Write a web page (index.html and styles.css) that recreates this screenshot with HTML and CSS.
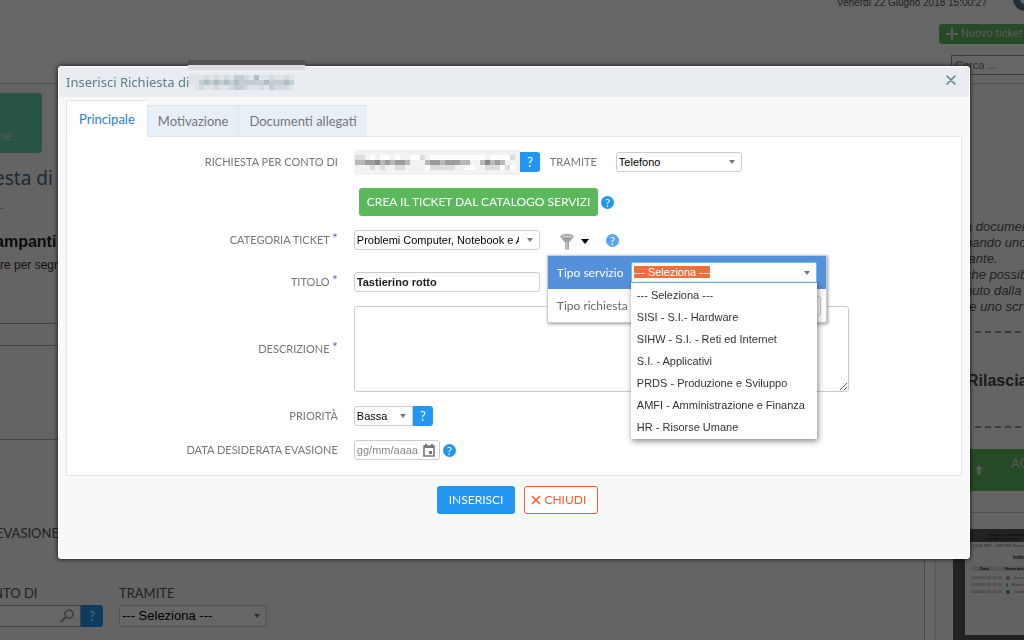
FILE: index.html
```html
<!DOCTYPE html>
<html lang="it">
<head>
<meta charset="utf-8">
<title>Inserisci Richiesta</title>
<link rel="stylesheet" href="styles.css">
</head>
<body>
<div class="page">
  <header class="top">
    <div class="clock">Venerdì 22 Giugno 2018 15:00:27 <span class="avatar"></span></div>
    <button class="new-ticket"><svg width="12" height="12" viewBox="0 0 12 12"><path d="M6 0v12M0 6h12" stroke="currentColor" stroke-width="2"/></svg>Nuovo ticket</button>
    <input class="search" aria-label="Cerca" placeholder="Cerca ...">
  </header>
  <div class="columns">
    <main class="main">
      <div class="tile">ne</div>
      <h1 class="h-request">esta di</h1>
      <p class="dot">.</p>
      <h2 class="h-print">ampanti</h2>
      <p class="p-print">re per segnalare</p>
      <div class="lines"><div></div><div></div><div></div></div>
      <p class="lbl due">EVASIONE</p>
      <div class="bg-form">
        <div class="bg-field left">
          <label class="lbl" for="bg-who">NTO DI</label>
          <div class="group"><span class="find"><input id="bg-who"><svg width="14" height="14" viewBox="0 0 14 14" fill="none" stroke="#999" stroke-width="1.6"><circle cx="9" cy="5" r="4"/><path d="M6 8L1 13" stroke-width="2"/></svg></span><button class="q big">?</button></div>
        </div>
        <div class="bg-field">
          <label class="lbl" for="bg-via">TRAMITE</label>
          <span class="sel"><select id="bg-via"><option>--- Seleziona ---</option></select></span>
        </div>
      </div>
    </main>
    <aside class="aside">
      <div class="side-card">
        <p class="note">a documen<br>nando uno<br>tante.<br>che possib<br>nuto dalla<br>re uno scr</p>
        <div class="dash"></div>
        <h2 class="release">Rilascia</h2>
        <div class="dash"></div>
        <button class="update"><svg width="8" height="10" viewBox="0 0 10 12"><path d="M5 0l5 5H7v7H3V5H0z" fill="currentColor"/></svg><span>AGGIORNA</span></button>
      </div>
      <div class="thumb">
        <div class="thumb-top">Categoria Consolidamento<br>Categoria richiesta</div>
        <div class="thumb-page">
          <p class="thumb-title">CLICK.NET – NET HR Service</p>
          <p class="thumb-head">Indice</p>
          <div class="thumb-row th"><b>Data</b><b>Nome assistenza</b></div>
          <div class="thumb-row"><span>12/06/2018 11:07</span><i></i><span>In osservazione</span></div>
          <div class="thumb-row"><span>31/05/2018 12:01</span><i class="g"></i><span>Attesa assegnazione</span></div>
          <div class="thumb-row"><span>12/05/2018 11:18</span><i class="b"></i><span>Ticket inviato</span></div>
        </div>
      </div>
    </aside>
  </div>
</div>
<div class="backdrop"></div>

<section class="dialog" role="dialog" aria-labelledby="dlg-title">
  <span class="strip"></span>
  <header class="dlg-head">
    <h2 id="dlg-title">Inserisci Richiesta di</h2>
    <svg class="mosaic" width="105" height="15" viewBox="0 0 21 3" fill="none" shape-rendering="crispEdges">
      <path d="M0 .5h21M0 1.5h21M1 2.5h20" stroke="#dfe4e8"/>
      <path d="M3 .5h1M5 .5h1M7 .5h1M9 .5h1M11 .5h1M16 .5h1M19 .5h1M2 2.5h1M5 2.5h1M8 2.5h1M11 2.5h1M14 2.5h1M17 2.5h3" stroke="#d3dade"/>
      <path d="M9 .5h2M2 1.5h19M9 2.5h2M16 2.5h1" stroke="#c3ced4"/>
      <path d="M3 1.5h1M5 1.5h1M7 1.5h1M9 1.5h1M15 1.5h1M19 1.5h1M13 .5h1" stroke="#afbec6"/>
    </svg>
    <button class="close" aria-label="Chiudi finestra"><svg width="10" height="10" viewBox="0 0 10 10"><path d="M1 1l8 8M9 1L1 9" stroke="currentColor" stroke-width="1.6" stroke-linecap="round"/></svg></button>
  </header>
  <div class="dlg-body">
    <nav class="tabs" role="tablist">
      <button class="tab active" role="tab">Principale</button>
      <button class="tab" role="tab">Motivazione</button>
      <button class="tab" role="tab">Documenti allegati</button>
    </nav>
    <form class="panel" id="request">
      <div class="row">
        <label for="who">RICHIESTA PER CONTO DI</label>
        <div class="field">
          <span class="group masked"><input id="who" class="who"><svg class="mask" width="165" height="25" viewBox="0 0 33 5" fill="none" shape-rendering="crispEdges">
            <path d="M0 .5h33M0 1.5h33M0 2.5h33M0 3.5h33M0 4.5h33" stroke="#f2f2f2"/>
            <path d="M3 1.5h1M5 1.5h2M8 1.5h1M11 1.5h2M15 1.5h11M27 1.5h4M14 3.5h1M22 3.5h2M29 3.5h1M31 3.5h1" stroke="#fff"/>
            <path d="M0 1.5h2M13 1.5h1M31 1.5h1M3 3.5h1M5 3.5h1M8 3.5h2M15 3.5h5M26 3.5h3M30 3.5h1" stroke="#dcdcdc"/>
            <path d="M0 2.5h11M14 2.5h9M25 2.5h5" stroke="#b8b8b8"/>
            <path d="M2 2.5h3M6 2.5h1M8 2.5h2M15 2.5h2M18 2.5h3M26 2.5h1M28 2.5h1" stroke="#9c9c9c"/>
            <path d="M4 2.5h1M26 2.5h1" stroke="#888"/>
          </svg><button type="button" class="q">?</button></span>
          <label class="via" for="via">TRAMITE</label>
          <span class="sel w-via"><select id="via"><option>Telefono</option></select></span>
        </div>
      </div>
      <div class="row nudge">
        <span></span>
        <div class="field"><button type="button" class="btn catalog">CREA IL TICKET DAL CATALOGO SERVIZI</button><button type="button" class="help">?</button></div>
      </div>
      <div class="row">
        <label for="cat">CATEGORIA TICKET <sup>*</sup></label>
        <div class="field">
          <span class="sel w-text"><select id="cat"><option>Problemi Computer, Notebook e Accessori</option></select></span>
          <div class="filter">
            <button type="button" class="filter-btn" aria-label="Filtro">
              <svg width="14" height="16" viewBox="0 0 14 16"><path d="M1 3c1 3 4 4 4 6v6.500h4V9c0-2 3-3 4-6z" fill="#a2a2a2"/><path d="M6.500 8v7" stroke="#ccc" stroke-width="1.500"/><ellipse cx="7" cy="2.500" rx="6.300" ry="2" fill="#c4c0c4" stroke="#939393"/></svg>
              <svg width="8" height="5" viewBox="0 0 8 5"><path d="M0 0h8L4 5z" fill="#000"/></svg>
            </button>
            <div class="filter-menu">
              <div class="filter-row on">
                <span id="svc-label">Tipo servizio</span>
                <div class="combo">
                  <button type="button" class="combo-btn" aria-labelledby="svc-label" aria-expanded="true"><mark>--- Seleziona ---</mark></button>
                  <ul class="options" role="listbox">
                    <li role="option">--- Seleziona ---</li>
                    <li role="option">SISI - S.I.- Hardware</li>
                    <li role="option">SIHW - S.I. - Reti ed Internet</li>
                    <li role="option">S.I. - Applicativi</li>
                    <li role="option">PRDS - Produzione e Sviluppo</li>
                    <li role="option">AMFI - Amministrazione e Finanza</li>
                    <li role="option">HR - Risorse Umane</li>
                  </ul>
                </div>
              </div>
              <div class="filter-row">
                <label for="req-type">Tipo richiesta</label>
                <span class="sel"><select id="req-type"><option></option></select></span>
              </div>
            </div>
          </div>
          <button type="button" class="help light">?</button>
        </div>
      </div>
      <div class="row spaced">
        <label for="title">TITOLO <sup>*</sup></label>
        <div class="field"><input id="title" class="w-text strong" value="Tastierino rotto"></div>
      </div>
      <div class="row">
        <label for="desc">DESCRIZIONE <sup>*</sup></label>
        <div class="field"><textarea id="desc"></textarea></div>
      </div>
      <div class="row">
        <label for="prio">PRIORITÀ</label>
        <div class="field"><span class="group"><span class="sel w-prio"><select id="prio"><option>Bassa</option></select></span><button type="button" class="q">?</button></span></div>
      </div>
      <div class="row">
        <label for="date">DATA DESIDERATA EVASIONE</label>
        <div class="field">
          <span class="date"><input id="date" placeholder="gg/mm/aaaa"><button type="button" aria-label="Calendario"><svg width="12" height="13" viewBox="0 0 12 13"><path d="M1 2h10v10H1z" fill="none" stroke="#777" stroke-width="1.600"/><path d="M1 3h10M3 0v2M9 0v2" stroke="#777" stroke-width="2"/><path d="M6 7h3v3H6z" fill="#777"/></svg></button></span>
          <button type="button" class="help">?</button>
        </div>
      </div>
    </form>
    <footer class="actions">
      <button class="btn primary" form="request">INSERISCI</button>
      <button class="btn danger"><svg width="10" height="10" viewBox="0 0 10 10"><path d="M1 1l8 8M9 1L1 9" stroke="currentColor" stroke-width="1.600"/></svg>CHIUDI</button>
    </footer>
  </div>
</section>
</body>
</html>
```
FILE: styles.css
```css
* { box-sizing: border-box; }
body { margin: 0; height: 100vh; overflow: hidden; background: #fff; font: 11px/16px "Liberation Sans", Arial, sans-serif; color: #333; }
h1, h2, p, ul { margin: 0; padding: 0; font-weight: normal; }
button, input, select, textarea { font: inherit; color: inherit; margin: 0; padding: 0; }
button { border: 0; background: none; white-space: nowrap; }
svg { display: block; flex: none; }

/* page behind the dialog */
.page { height: 100vh; overflow: hidden; display: flex; flex-direction: column; white-space: nowrap; }
.top { height: 84px; flex: none; border-bottom: 1px solid #ccc; display: flex; flex-direction: column; align-items: flex-end; }
.clock { height: 24px; margin-top: -5px; display: flex; gap: 26px; font-size: 10px; margin-right: -13px; color: #555; }
.avatar { width: 24px; height: 24px; margin-top: -8px; border-radius: 50%; border: 7px solid #4c7690; background: #fff; }
.new-ticket { height: 20px; margin-top: 5px; padding: 0 0 0 7px; display: flex; align-items: center; gap: 3px; flex: none; width: 85px; border-radius: 3px 0 0 3px; background: #5cb85c; color: #dfe8df; font: 11px/20px Roboto, sans-serif; }
.search { width: 73px; flex: none; height: 20px; margin-top: 11px; padding-left: 3px; border: 1px solid #999; border-right: 0; font-size: 11px; }
.search::placeholder { color: #777; opacity: 1; }
.columns { flex: 1; min-height: 0; display: flex; gap: 10px; }
.main { flex: 1; min-width: 0; border-right: 1px solid #bbb; background: #fafafa; }
.aside { width: 89px; flex: none; overflow: hidden; border-left: 1px solid #ddd; background: #fafafa; }
.tile { width: 44px; height: 60px; margin: 9px 0 0 -2px; padding-top: 34px; border-radius: 0 3px 3px 0; background: #68d1ad; color: #d5ece4; font: 12px/18px Lato, sans-serif; }
.h-request { margin: 12px 0 0 -6px; font: 19px/26px "Noto Sans", sans-serif; color: #4c6a80; }
.dot { height: 16px; margin-top: 6px; }
.h-print { margin: 20px 0 0 -5px; font-size: 16px; line-height: 18px; font-weight: bold; color: #222; }
.p-print { margin-top: 6px; font-size: 12px; line-height: 16px; }
.lines { margin-top: 50px; }
.lines div { height: 22px; border-top: 1px solid #aaa; }
.lines div + div { height: 42px; }
.lines div + div + div { margin-top: 52px; height: 84px; }
.lbl { font: 13px/20px Lato, sans-serif; color: #555; }
.due { margin-left: -4px; }
.bg-form { display: flex; gap: 16px; margin-top: 40px; }
.bg-field { display: flex; flex-direction: column; gap: 2px; }
.bg-field.left .lbl { margin-left: -7px; }
.bg-field .sel { width: 148px; height: 22px; font-size: 13px; }
.find { display: flex; align-items: center; width: 81px; height: 22px; padding-right: 6px; border: 1px solid #aaa; border-left: 0; background: #fff; }
.find input { flex: 1; min-width: 0; height: 18px; border: 0; background: none; }
.side-card { height: 429px; padding: 135px 0 0 35px; border-bottom: 1px solid #ccc; margin-bottom: 16px; }
.note { font: italic 13px/16px "Liberation Sans", Arial, sans-serif; color: #555; margin-left: -6px; }
.dash { height: 2px; background: repeating-linear-gradient(90deg, #999 0 6px, transparent 6px 10px); margin: 16px 0 0 4px; }
.release { margin: 38px 0 0 -4px; font-size: 16px; line-height: 20px; font-weight: bold; color: #444; }
.release + .dash { margin-top: 35px; }
.update { display: flex; gap: 28px; align-items: center; width: 80px; height: 42px; margin: 21px 0 0 -4px; padding-left: 8px; background: #5cb85c; color: #ddd; font: 13px/20px Lato, sans-serif; }
.update span { margin-bottom: 14px; }
.thumb { margin-left: 17px; height: 112px; padding-left: 12px; background: #555; overflow: hidden; font-size: 4px; line-height: 4px; }
.thumb-top { height: 13px; padding: 4px 0 0 21px; color: #111; }
.thumb-page { height: 93px; width: 90px; padding: 2px 6px; background: #f4f4f4; }
.thumb-title { color: #3c6c8c; font-size: 4px; }
.thumb-head { padding: 7px 0 7px 42px; font-size: 5px; font-weight: bold; }
.thumb-row { display: flex; align-items: center; gap: 4px; height: 7px; color: #777; }
.thumb-row.th { height: 5px; margin-bottom: 3px; gap: 16px; padding-left: 9px; background: #cfdce8; color: #222; }
.thumb-row i { width: 4px; height: 4px; border-radius: 50%; background: #999; }
.thumb-row .g { background: #6a9; }
.thumb-row .b { background: #2288cc; }
.backdrop { position: fixed; inset: 0; background: rgba(0, 0, 0, .6); }

/* dialog */
.dialog { position: fixed; top: 66px; left: 58px; right: 54px; border-radius: 3px; background: #f8f8f8; border: 1px solid #fff; box-shadow: 0 0 5px rgba(0, 0, 0, .9); }
.strip { position: absolute; top: -7px; left: 129px; width: 117px; height: 10px; border-top: 5px solid #515151; background: #dadcde; }
.dlg-head { height: 30px; padding: 0 13px 0 7px; display: flex; align-items: center; background: #e9edf1; color: #5b7c8c; }
.dlg-head h2 { font: 13px/28px "Noto Sans", sans-serif; }
.close { margin-left: auto; padding-bottom: 4px; color: #5b8394; }
.dlg-body { padding: 3px 7px 44px; }
.tabs { display: flex; align-items: flex-end; position: relative; z-index: 1; margin-bottom: -1px; }
.tab { height: 32px; padding: 0 10px; border: 1px solid #dde6ee; border-width: 1px 0 1px 1px; background: #e7eff7; color: #777; font: 13px/30px Lato, sans-serif; }
.tab.active { height: 37px; padding: 0 12px; border-bottom-color: #fff; background: #fff; color: #2a80d8; }
.panel { display: grid; gap: 14px; padding: 15px 0; border: 1px solid #e0e6ea; background: #fff; }
.row { display: grid; grid-template-columns: minmax(0, 4fr) minmax(0, 9fr); column-gap: 16px; align-items: center; padding-left: 1px; }
.row.nudge { margin-top: 2px; }
.row.spaced { margin-top: 8px; }
.row > label { text-align: right; }
.row > label, .via { font: 11px/16px Lato, sans-serif; color: #777; }
.row sup { font-size: 13px; line-height: 0; vertical-align: 1px; color: #5560d0; }
.field { display: flex; align-items: center; }
.group { display: flex; }
.masked { position: relative; }
.mask { position: absolute; top: -2px; left: 1px; }
.q { width: 20px; height: 20px; border-radius: 0 3px 3px 0; background: #2196f3; color: #fff; font: 13px/20px Lato, sans-serif; }
.q.big { width: 22px; height: 22px; }
.field input, .sel, .date { height: 20px; border: 1px solid #ccc; border-radius: 3px; background: #fff; color: #000; }
.field input { padding: 0 2px; }
.sel { position: relative; display: inline-block; }
.sel select { appearance: none; width: 100%; height: 100%; padding: 0 20px 0 2px; border: 0; background: none; }
.sel::after, .combo-btn::after { content: ""; position: absolute; right: 6px; top: 50%; margin-top: -2px; border: 3px solid transparent; border-top: 4px solid #777; border-bottom: 0; }
.field .who { width: 166px; border-color: #f2f2f2; border-radius: 0; }
.via { margin: 0 19px 0 10px; }
.w-via { width: 126px; }
.w-text { width: 186px; }
.w-prio { width: 59px; border-radius: 3px 0 0 3px; }
.field .strong { font-weight: bold; color: #222; }
.btn { height: 28px; border: 1px solid transparent; border-radius: 3px; padding: 0 11px; display: flex; align-items: center; gap: 4px; font: 12px/26px Lato, sans-serif; }
.catalog { margin-left: 5px; padding: 0 7px; background: #5cb85c; color: #fff; }
.help { width: 13px; height: 13px; margin-left: 3px; border-radius: 50%; background: #2196f3; color: #fff; font: 12px/13px Lato, sans-serif; }
.help.light { margin-left: 17px; background: #57a5f5; }
.filter { position: relative; margin-left: 20px; }
.filter-btn { display: flex; align-items: center; gap: 7px; height: 20px; padding-top: 3px; }
.filter-menu { position: absolute; z-index: 5; top: 25px; left: -13px; width: 280px; border: 1px solid #ccc; background: #fff; box-shadow: 1px 1px 3px rgba(0, 0, 0, .4); }
.filter-row { display: flex; align-items: center; justify-content: space-between; height: 33px; padding: 0 5px 0 9px; font: 12px/16px Lato, sans-serif; color: #666; white-space: nowrap; }
.filter-row.on { padding-right: 9px; background: #5590db; color: #fff; }
.filter-row .sel { width: 186px; }
.combo { position: relative; width: 186px; }
.combo-btn { position: relative; display: block; width: 100%; height: 21px; padding-left: 2px; text-align: left; border: 1px solid #66bff5; border-radius: 2px 2px 0 0; background: #fff; font: 11px/19px "Liberation Sans", Arial, sans-serif; }
.combo-btn mark { padding: 0; background: #f0703c; color: #fff; }
.options { position: absolute; z-index: 6; top: 21px; left: 0; right: 0; padding: 1px 0; list-style: none; background: #fff; box-shadow: 1px 2px 6px rgba(0, 0, 0, .5); color: #333; font: 11px/22px "Liberation Sans", Arial, sans-serif; }
.options li { padding-left: 6px; }
textarea { display: block; width: 495px; max-width: 100%; height: 86px; padding: 2px; border: 1px solid #ccc; border-radius: 3px; background: #fff; }
.date { display: flex; align-items: center; width: 86px; padding-right: 4px; }
.date input { flex: 1; min-width: 0; height: 18px; border: 0; background: none; }
.date input::placeholder { color: #888; opacity: 1; }
.actions { display: flex; justify-content: center; gap: 9px; padding: 10px 0 0 7px; }
.primary { background: #2196f3; color: #fff; }
.danger { padding: 0 11px 0 6px; gap: 3px; border-color: #ff5a2c; background: #fff; color: #ff5a2c; }
```
